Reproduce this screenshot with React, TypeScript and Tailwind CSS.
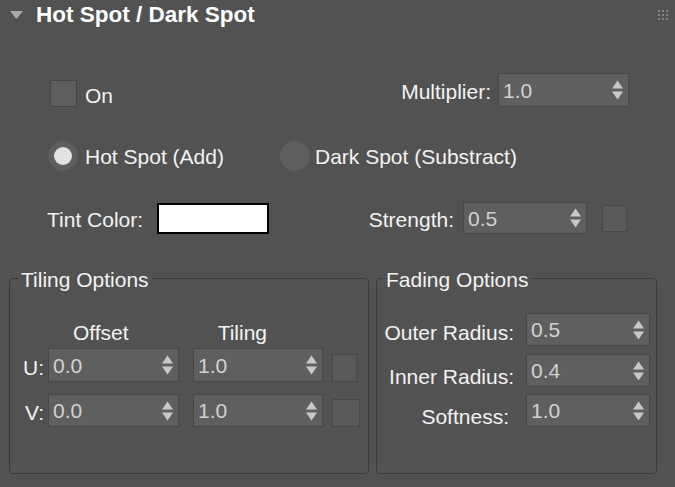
import React from "react";

const Spinner = ({ value, className }: { value: string; className: string }) => (
  <div
    className={`flex items-center justify-between border border-[#474747] bg-[#5f5f5f] pl-[4px] pr-[5px] ${className}`}
  >
    <span className="leading-[21px] text-[#d2d2d2]">{value}</span>
    <svg width="11" height="20" viewBox="0 0 11 20" className="fill-[#c8c8c8]">
      <polygon points="5.5,0.5 11,8.5 0,8.5" />
      <polygon points="0,11.5 11,11.5 5.5,19.5" />
    </svg>
  </div>
);

const Swatch = ({ className }: { className: string }) => (
  <div className={`border border-[#474747] bg-[#5a5a5a] ${className}`} />
);

const Radio = ({ on }: { on?: boolean }) => (
  <div className="flex h-[30px] w-[30px] items-center justify-center rounded-full bg-[#5e5e5e]">
    {on && <div className="h-[18px] w-[18px] rounded-full bg-[#e2e2e2]" />}
  </div>
);

const Grip = () => (
  <svg width="10" height="10" viewBox="0 0 10 10" className="fill-[#858585]">
    {[0, 4, 8].map((y) =>
      [0, 4, 8].map((x) => <rect key={`${x}-${y}`} x={x} y={y} width="2" height="2" />)
    )}
  </svg>
);

export default function App() {
  return (
    <div className="h-[487px] w-[675px] overflow-hidden bg-[#525252] font-['Liberation_Sans',Arial,sans-serif] text-[21px] leading-[21px] text-[#f2f2f2]">
      {/* rollout header */}
      <div className="flex h-[30px] items-center pl-[10px] pr-[7px]">
        <svg width="13" height="8" viewBox="0 0 13 8" className="fill-[#a8a8a8]">
          <polygon points="0,0 13,0 6.5,8" />
        </svg>
        <span className="ml-[13px] text-[22.5px] font-bold leading-[22.5px] text-white">
          Hot Spot / Dark Spot
        </span>
        <div className="ml-auto">
          <Grip />
        </div>
      </div>

      {/* On / Multiplier */}
      <div className="mt-[43px] flex h-[34px] justify-between pl-[50px] pr-[46px]">
        <div className="flex h-[27px] items-center self-end">
          <div className="h-[27px] w-[27px] border border-[#454545] bg-[#5e5e5e]" />
          <span className="ml-[8px] pt-[3px]">On</span>
        </div>
        <div className="flex items-center">
          <span className="pt-[3px]">Multiplier:</span>
          <Spinner value="1.0" className="ml-[7px] h-[34px] w-[131px]" />
        </div>
      </div>

      {/* mode radios */}
      <div className="mt-[34px] flex h-[30px] items-center pl-[48px]">
        <div className="flex w-[232px] items-center">
          <Radio on />
          <span className="ml-[7px]">Hot Spot (Add)</span>
        </div>
        <div className="flex items-center">
          <Radio />
          <span className="ml-[5px]">Dark Spot (Substract)</span>
        </div>
      </div>

      {/* tint / strength */}
      <div className="mt-[31px] flex h-[32px] items-center justify-between pl-[47px] pr-[48px]">
        <div className="flex items-center">
          <span className="w-[110px] pt-[2px]">Tint Color:</span>
          <div className="h-[31px] w-[112px] border-2 border-black bg-white" />
        </div>
        <div className="flex items-center">
          <span className="pt-[3px]">Strength:</span>
          <Spinner value="0.5" className="ml-[9px] h-[32px] w-[124px]" />
          <Swatch className="ml-[15px] h-[27px] w-[25px]" />
        </div>
      </div>

      {/* option groups */}
      <div className="mt-[32px] flex gap-[7px] pl-[9px]">
        <fieldset className="h-[208px] w-[360px] rounded-[4px] border border-[#3a3a3a] pl-[8px] pt-[32px]">
          <legend className="px-[3px] pt-[3px] leading-[21px]">Tiling Options</legend>
          <div className="flex h-[21px]">
            <span className="ml-[55px]">Offset</span>
            <span className="ml-[89px]">Tiling</span>
          </div>
          <div className="mt-[5px] flex h-[34px]">
            <span className="w-[26px] self-center pt-[5px] text-right">U:</span>
            <Spinner value="0.0" className="ml-[4px] h-[34px] w-[131px]" />
            <Spinner value="1.0" className="ml-[14px] h-[34px] w-[130px]" />
            <Swatch className="ml-[9px] h-[28px] w-[25px] self-end" />
          </div>
          <div className="mt-[12px] flex h-[33px]">
            <span className="w-[26px] self-center pt-[3px] text-right">V:</span>
            <Spinner value="0.0" className="ml-[4px] h-[33px] w-[131px]" />
            <Spinner value="1.0" className="ml-[14px] h-[33px] w-[130px]" />
            <Swatch className="ml-[9px] h-[28px] w-[28px] self-end" />
          </div>
        </fieldset>

        <fieldset className="h-[208px] w-[281px] rounded-[4px] border border-[#3a3a3a] pl-[6px] pt-[23px]">
          <legend className="px-[3px] pt-[3px] leading-[21px]">Fading Options</legend>
          <div className="flex h-[33px] items-center">
            <span className="w-[131px] pt-[5px] text-right">Outer Radius:</span>
            <Spinner value="0.5" className="ml-[12px] h-[33px] w-[124px]" />
          </div>
          <div className="mt-[8px] flex h-[33px] items-center">
            <span className="w-[131px] pt-[11px] text-right">Inner Radius:</span>
            <Spinner value="0.4" className="ml-[12px] h-[33px] w-[124px]" />
          </div>
          <div className="mt-[7px] flex h-[33px] items-center">
            <span className="w-[131px] pr-[5px] pt-[11px] text-right">Softness:</span>
            <Spinner value="1.0" className="ml-[12px] h-[33px] w-[124px]" />
          </div>
        </fieldset>
      </div>
    </div>
  );
}
